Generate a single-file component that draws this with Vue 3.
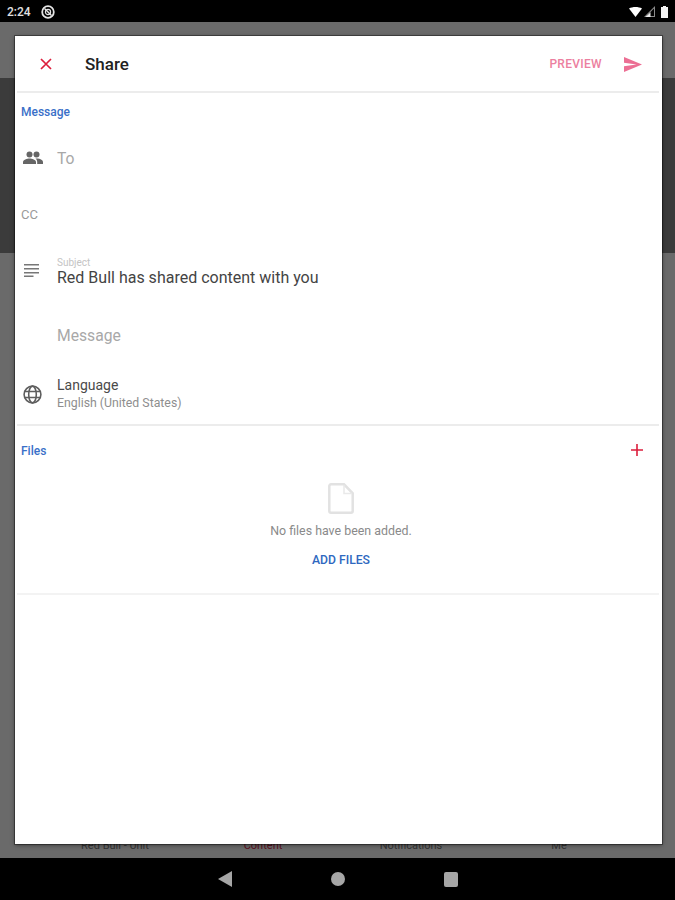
<template>
  <div class="screen">
    <header class="status-bar">
      <div class="status-left">
        <span class="clock">2:24</span>
        <svg class="dnd" width="14" height="14" viewBox="0 0 14 14">
          <circle cx="7" cy="7" r="5.8" fill="none" stroke="#e4e4e4" stroke-width="1.8" />
          <circle cx="7" cy="7" r="2.6" fill="none" stroke="#e4e4e4" stroke-width="1.2" />
          <path d="M3.5 3.500l7 7" stroke="#e4e4e4" stroke-width="1.400" />
        </svg>
      </div>
      <div class="status-right">
        <svg width="13" height="10" viewBox="0 0 13 10"><path d="M0 1.500C3.500-.5 9.500-.5 13 1.500L6.500 10z" fill="#fff" /></svg>
        <svg width="11" height="11" viewBox="0 0 11 11">
          <path d="M11 0v11H0z" fill="#8a8a8a" />
          <path d="M10 2.600V10H2.600z" fill="#000" />
          <path d="M6.500 6.200V11H1.500z" fill="#eee" />
        </svg>
        <svg class="battery" width="7" height="12" viewBox="0 0 7 12"><path d="M2 0h3v1h2v11H0V1h2z" fill="#f2f2f2" /></svg>
      </div>
    </header>

    <main class="backdrop">
      <div class="bd-top"></div>
      <div class="bd-dark"></div>
      <div class="bd-rest">
        <div class="bd-tabs">
          <span>Red Bull - Unit</span>
          <span class="bd-active">Content</span>
          <span>Notifications</span>
          <span>Me</span>
        </div>
      </div>

      <section class="dialog">
        <div class="toolbar">
          <svg class="close" width="14" height="14" viewBox="0 0 14 14">
            <path d="M2 2l10 10M12 2L2 12" stroke="#dc1e3c" stroke-width="1.700" />
          </svg>
          <h1 class="title">Share</h1>
          <span class="preview">PREVIEW</span>
          <svg width="18" height="15" viewBox="0 0 18 15">
            <path d="M0 0l18 7.500L0 15V9.200l12.500-1.700L0 5.800z" fill="#ec6f94" />
          </svg>
        </div>

        <div class="section-label">Message</div>

        <div class="row row-to">
          <svg class="row-icon" width="20" height="14" viewBox="0 0 20 14">
            <circle cx="6.500" cy="3.400" r="3" fill="#666" />
            <circle cx="13.500" cy="3.400" r="3" fill="#666" />
            <path d="M0 13v-2c0-2.400 4-3.600 6.500-3.600S13 8.600 13 11v2z" fill="#666" />
            <path d="M14.200 13v-2c0-1.400-.6-2.500-1.700-3.400 3-.5 7.500.7 7.500 3.400v2z" fill="#666" />
          </svg>
          <span class="placeholder">To</span>
        </div>

        <div class="row row-cc">
          <span class="cc">CC</span>
        </div>

        <div class="row row-subject">
          <svg class="row-icon subject-icon" width="15" height="13" viewBox="0 0 15 13">
            <path d="M0 .8h15M0 4.800h15M0 8.800h15M0 12.200h9.500" stroke="#777" stroke-width="1.600" />
          </svg>
          <div class="field">
            <span class="tiny">Subject</span>
            <span class="value">Red Bull has shared content with you</span>
          </div>
        </div>

        <div class="row row-message">
          <span class="placeholder">Message</span>
        </div>

        <div class="row row-lang">
          <svg class="row-icon" width="19" height="19" viewBox="0 0 19 19" fill="none" stroke="#5e5e5e" stroke-width="1.600">
            <circle cx="9.500" cy="9.500" r="8.400" />
            <ellipse cx="9.500" cy="9.500" rx="3.800" ry="8.400" />
            <path d="M1.600 6.500h15.800M1.600 12.500h15.800" />
          </svg>
          <div class="field">
            <span class="lang-name">Language</span>
            <span class="lang-value">English (United States)</span>
          </div>
        </div>

        <div class="files">
          <div class="files-head">
            <span class="section-label files-label">Files</span>
            <svg width="12" height="12" viewBox="0 0 12 12">
              <path d="M6 0v12M0 6h12" stroke="#dc1e3c" stroke-width="1.600" />
            </svg>
          </div>
          <div class="empty">
            <svg width="26" height="31" viewBox="0 0 26 31" fill="none">
              <path d="M3 1.300h13l8.700 9V28a1.700 1.700 0 0 1-1.700 1.700H3A1.700 1.700 0 0 1 1.300 28V3A1.700 1.700 0 0 1 3 1.300z" stroke="#e2e2e2" stroke-width="2.500" />
              <path d="M16 2v8.500h8" stroke="#e9e9e9" stroke-width="1.500" />
            </svg>
            <p class="empty-text">No files have been added.</p>
            <span class="add-files">ADD FILES</span>
          </div>
        </div>
      </section>
    </main>

    <footer class="nav-bar">
      <svg width="14" height="16" viewBox="0 0 14 16"><path d="M14 0v16L0 8z" fill="#a6a6a6" /></svg>
      <span class="nav-circle"></span>
      <span class="nav-square"></span>
    </footer>
  </div>
</template>

<script setup>
</script>

<style>
body {
  margin: 0;
  background: #000;
}
</style>

<style scoped>
.screen {
  width: 675px;
  height: 900px;
  display: flex;
  flex-direction: column;
  font-family: Roboto, "Liberation Sans", sans-serif;
  overflow: hidden;
}

.status-bar {
  height: 22px;
  background: #000;
  display: flex;
  align-items: center;
  justify-content: space-between;
  padding: 1px 7px 0 7px;
  box-sizing: border-box;
  flex: none;
}

.status-left {
  display: flex;
  align-items: center;
  gap: 10px;
}

.clock {
  color: #e0e0e0;
  font-size: 12px;
  font-weight: 500;
}

.status-right {
  display: flex;
  align-items: center;
  gap: 2px;
}

.battery {
  margin-left: 4px;
}

.backdrop {
  position: relative;
  flex: 1;
  display: flex;
  flex-direction: column;
}

.bd-top {
  height: 56px;
  background: #6a6a6a;
}

.bd-dark {
  height: 175px;
  background: #3b3b3b;
}

.bd-rest {
  flex: 1;
  background: #6a6a6a;
  display: flex;
  flex-direction: column;
  justify-content: flex-end;
}

.bd-tabs {
  display: grid;
  grid-template-columns: repeat(4, 148px);
  justify-items: center;
  padding: 0 41px;
  font-size: 11px;
  color: #333;
  height: 19px;
}

.bd-active {
  color: #5a1020;
}

.dialog {
  position: absolute;
  left: 15px;
  top: 14px;
  width: 647px;
  height: 808px;
  background: #fff;
  box-shadow: 0 0 0 1px rgba(0, 0, 0, 0.35), 0 1px 4px rgba(0, 0, 0, 0.5);
  display: flex;
  flex-direction: column;
}

.toolbar {
  height: 54px;
  margin: 0 3px 0 2px;
  padding: 1px 17px 0 22px;
  display: flex;
  align-items: center;
  border-bottom: 2px solid #ececec;
  flex: none;
}

.title {
  margin: 0 0 0 32px;
  font-size: 17px;
  font-weight: 500;
  color: #222;
  flex: 1;
}

.preview {
  font-size: 12px;
  font-weight: 500;
  letter-spacing: 0.3px;
  color: #ec7fa0;
  margin-right: 22px;
}

.section-label {
  font-size: 12px;
  font-weight: 500;
  color: #3a70c8;
  padding: 12px 0 0 6px;
  height: 42px;
  box-sizing: border-box;
  flex: none;
}

.row {
  display: flex;
  align-items: center;
  padding-left: 8px;
  box-sizing: border-box;
  flex: none;
}

.row-icon {
  flex: none;
}

.row-to {
  height: 46px;
}

.row-to .placeholder {
  margin-left: 14px;
}

.placeholder {
  font-size: 15.700px;
  color: #a8a8a8;
}

.row-cc {
  height: 66px;
  padding-left: 6px;
}

.cc {
  font-size: 13px;
  color: #9a9a9a;
}

.row-subject {
  height: 46px;
  padding-top: 6px;
}

.subject-icon {
  margin: -6px 0 0 1px;
}

.subject-icon + .field {
  margin-left: 18px;
}

.field {
  display: flex;
  flex-direction: column;
}

.tiny {
  font-size: 10px;
  line-height: 10px;
  color: #c4c4c4;
}

.value {
  font-size: 16px;
  line-height: 20px;
  color: #444;
}

.row-message {
  height: 84px;
  padding-left: 42px;
}

.row-lang {
  height: 34px;
}

.row-lang .field {
  margin-left: 15px;
}

.lang-name {
  font-size: 14px;
  line-height: 18px;
  color: #4a4a4a;
}

.lang-value {
  margin-top: 1px;
  font-size: 12.300px;
  line-height: 17px;
  color: #8e8e8e;
}

.files {
  margin: 13px 3px 0 2px;
  border-top: 2px solid #ececec;
  border-bottom: 2px solid #f3f3f3;
  height: 171px;
  box-sizing: border-box;
  flex: none;
}

.files-head {
  display: flex;
  align-items: center;
  justify-content: space-between;
  padding-right: 16px;
  height: 48px;
}

.files-label {
  padding: 1px 0 0 4px;
  height: auto;
}

.empty {
  display: flex;
  flex-direction: column;
  align-items: center;
  margin-top: -40px;
  padding: 49px 0 0 6px;
}

.empty-text {
  margin: 0;
  padding-top: 9px;
  font-size: 12.400px;
  color: #8a8a8a;
}

.add-files {
  margin-top: 15px;
  font-size: 12.200px;
  font-weight: 500;
  color: #2e68c0;
}

.nav-bar {
  height: 42px;
  background: #000;
  display: flex;
  align-items: center;
  justify-content: center;
  gap: 99px;
  flex: none;
}

.nav-circle {
  width: 14px;
  height: 14px;
  border-radius: 50%;
  background: #a6a6a6;
}

.nav-square {
  width: 14px;
  height: 15px;
  border-radius: 2px;
  background: #a6a6a6;
}
</style>
